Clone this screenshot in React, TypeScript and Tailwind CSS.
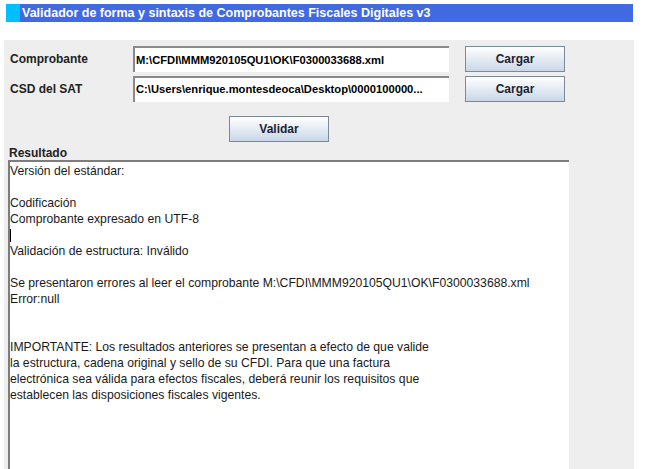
const lines: string[] = [
  'Versión del estándar:',
  '',
  'Codificación',
  'Comprobante expresado en UTF-8',
  '|CURSOR|',
  'Validación de estructura: Inválido',
  '',
  'Se presentaron errores al leer el comprobante M:\\CFDI\\MMM920105QU1\\OK\\F0300033688.xml',
  'Error:null',
  '',
  '',
  'IMPORTANTE: Los resultados anteriores se presentan a efecto de que valide',
  'la estructura, cadena original y sello de su CFDI. Para que una factura',
  'electrónica sea válida para efectos fiscales, deberá reunir los requisitos que',
  'establecen las disposiciones fiscales vigentes.',
]

function SwingButton({ label, width }: { label: string; width: string }) {
  return (
    <button
      className={`${width} h-[26px] border border-[#7a8a99] bg-gradient-to-b from-[#ffffff] to-[#c9d7e8] text-[12px] font-bold text-[#1e2233]`}
    >
      {label}
    </button>
  )
}

function Field({ value }: { value: string }) {
  return (
    <div className="w-[316px] h-[26px] bg-white border-t-2 border-l-2 border-t-[#8a8a8a] border-l-[#8a8a8a] flex items-center pl-[1px] text-[11.2px] font-bold text-black overflow-hidden whitespace-nowrap">
      {value}
    </div>
  )
}

export default function App() {
  return (
    <div
      className="w-[650px] h-[469px] bg-white overflow-hidden flex flex-col"
      style={{ fontFamily: '"Liberation Sans", Arial, sans-serif' }}
    >
      {/* Title bar */}
      <div className="mt-[4px] ml-[6px] w-[627px] h-[18px] flex">
        <div className="w-[14px] bg-[#00bfff]" />
        <div className="flex-1 bg-[#4169e1] text-white text-[12.5px] font-bold leading-[18px] pl-[2px]">
          Validador de forma y sintaxis de Comprobantes Fiscales Digitales v3
        </div>
      </div>

      {/* Panel */}
      <div className="mt-[18px] ml-[4px] w-[630px] flex-1 bg-[#eeeeee] flex flex-col">
        <div className="pt-[6px] flex flex-col gap-[4px]">
          <div className="flex items-center h-[26px]">
            <div className="w-[129px] pl-[6px] text-[12px] font-bold text-[#222]">Comprobante</div>
            <Field value="M:\CFDI\MMM920105QU1\OK\F0300033688.xml" />
            <div className="ml-[16px]">
              <SwingButton label="Cargar" width="w-[100px]" />
            </div>
          </div>
          <div className="flex items-center h-[25px]">
            <div className="w-[129px] pl-[6px] text-[12px] font-bold text-[#222]">CSD del SAT</div>
            <Field value="C:\Users\enrique.montesdeoca\Desktop\0000100000..." />
            <div className="ml-[16px]">
              <SwingButton label="Cargar" width="w-[100px]" />
            </div>
          </div>
        </div>

        <div className="mt-[15px] pl-[225px]">
          <SwingButton label="Validar" width="w-[100px]" />
        </div>

        <div className="mt-[4px] pl-[5px] h-[14px] leading-[14px] text-[12px] font-bold text-[#222]">
          Resultado
        </div>

        <div className="ml-[4px] w-[561px] flex-1 bg-white border-t-2 border-l-2 border-t-[#7d7d7d] border-l-[#7d7d7d] pt-[1px] text-[12.2px] leading-[16px] text-[#1a1a1a]">
          {lines.map((l, i) =>
            l === '|CURSOR|' ? (
              <div key={i} className="h-[16px] flex items-center">
                <div className="w-[1px] h-[13px] bg-black" />
              </div>
            ) : (
              <div key={i} className="h-[16px] whitespace-pre">
                {l}
              </div>
            ),
          )}
        </div>
      </div>
    </div>
  )
}
